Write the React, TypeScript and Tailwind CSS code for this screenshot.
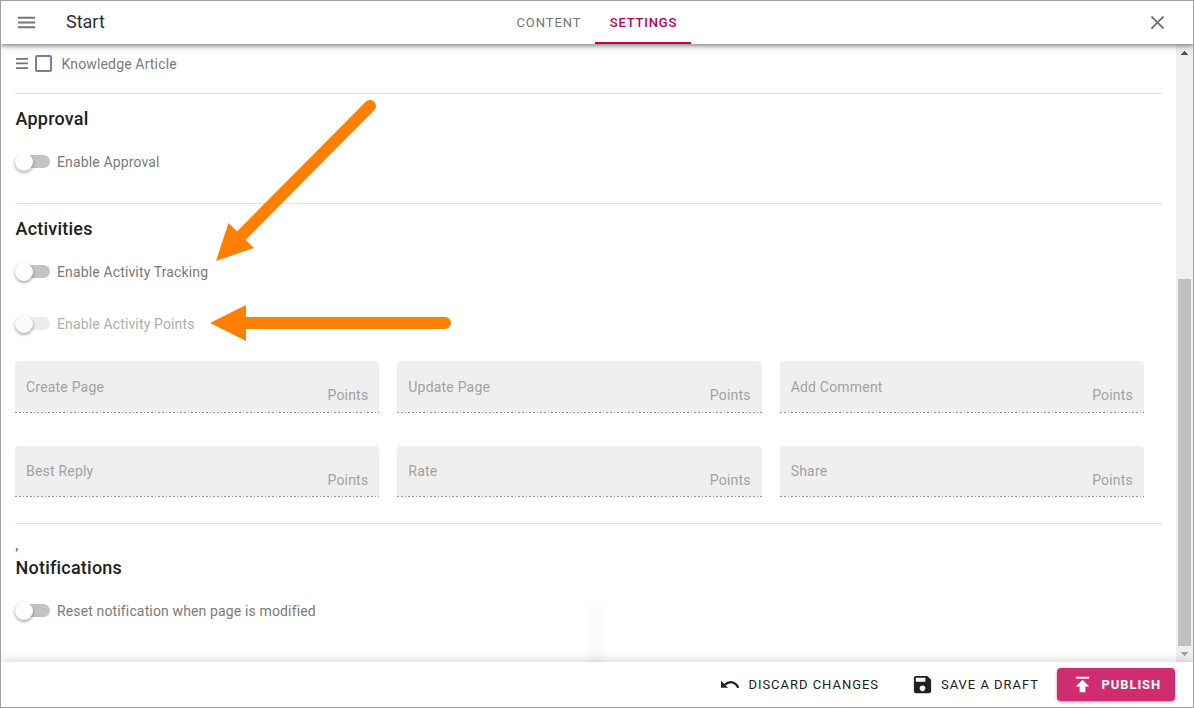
import React from "react";
import { MdMenu, MdClose, MdPublish, MdSave } from "react-icons/md";

function Divider({ className = "" }: { className?: string }) {
  return <div className={`h-px w-[1147px] shrink-0 bg-[#e0e0e0] ${className}`} />;
}

function Heading({ children, className = "" }: { children: React.ReactNode; className?: string }) {
  return (
    <h2 className={`h-6 shrink-0 pl-[0.5px] text-[18px] leading-6 font-medium tracking-[0.22px] text-[#212121] ${className}`}>
      {children}
    </h2>
  );
}

function Toggle({ label, disabled = false, className = "" }: { label: string; disabled?: boolean; className?: string }) {
  return (
    <label className={`flex h-6 shrink-0 items-start ${className}`}>
      <span className={`mt-[5px] flex h-[13px] w-[35px] rounded-full ${disabled ? "bg-[#ececec]" : "bg-[#c3c3c3]"}`}>
        <span
          className={`-mt-[2px] size-[18px] shrink-0 rounded-full shadow-[0_2px_3px_rgba(0,0,0,0.25),0_1px_4px_rgba(0,0,0,0.12)] ${
            disabled ? "bg-[#fafafa]" : "bg-white"
          }`}
        />
      </span>
      <span className={`ml-[7px] text-sm leading-6 tracking-[0.14px] ${disabled ? "text-[#adadad]" : "text-[#7a7a7a]"}`}>
        {label}
      </span>
    </label>
  );
}

function Field({ label, labelClass = "pt-4" }: { label: string; labelClass?: string }) {
  return (
    <div className="flex flex-col rounded-t-[4px] bg-[#efefef] text-sm tracking-[0.2px] text-[#a2a2a2]">
      <div className="flex flex-1 items-start justify-between pr-[11px] pl-[11px]">
        <span className={`leading-5 ${labelClass}`}>{label}</span>
        <span className="pt-6 leading-5">Points</span>
      </div>
      <div className="h-px bg-white">
        <div className="h-px bg-[repeating-linear-gradient(90deg,#969696_0_2px,transparent_2px_4px,#969696_4px_6px,transparent_6px_8px,#969696_8px_9px,transparent_9px_11px)]" />
      </div>
    </div>
  );
}

export default function App() {
  return (
    <div className="relative flex h-[708px] w-[1194px] flex-col overflow-hidden border border-[#a0a0a0] bg-white font-['Roboto',sans-serif]">
      <header className="relative z-10 grid h-[43px] shrink-0 grid-cols-[501px_190px_1fr] bg-white shadow-[0_2px_4px_rgba(0,0,0,0.38),0_3px_9px_rgba(0,0,0,0.12)]">
        <div className="flex items-center pl-[14px]">
          <MdMenu className="-mt-px size-[23px] text-[#757575]" />
          <span className="-mt-[3px] ml-7 text-[18px] text-[#303030]">Start</span>
        </div>
        <nav className="flex text-[13px]">
          <span className="flex w-[93px] items-center justify-center pl-px tracking-[0.95px] text-[#757575]">CONTENT</span>
          <span className="flex w-24 items-center justify-center border-b-2 border-[#c2004f] pt-[2px] pl-px font-medium tracking-[0.8px] text-[#c2004f]">
            SETTINGS
          </span>
        </nav>
        <div className="flex items-center justify-end pr-[24px]">
          <MdClose className="-mt-px size-[23px] text-[#757575]" />
        </div>
      </header>

      <div className="flex h-[618px] shrink-0">
        <main className="flex flex-1 flex-col pl-[14px]">
          <div className="flex h-10 shrink-0 items-center">
            <svg width="12" height="11" viewBox="0 0 12 11" className="-mt-px ml-[0.5px] fill-[#757575]">
              <path d="M0 0h12v1.7H0zM0 4.6h12v1.7H0zM0 9.2h12v1.7H0z" />
            </svg>
            <span className="-mt-px ml-[7.5px] size-[17px] rounded-[2px] border-2 border-[#808080]" />
            <span className="ml-[9.5px] text-sm tracking-[0.15px] text-[#7a7a7a]">Knowledge Article</span>
          </div>
          <Divider className="mt-[9px]" />
          <Heading className="mt-[13px]">Approval</Heading>
          <Toggle className="mt-[19px]" label="Enable Approval" />
          <Divider className="mt-[29px]" />
          <Heading className="mt-[13px]">Activities</Heading>
          <Toggle className="mt-[19px]" label="Enable Activity Tracking" />
          <Toggle className="mt-7" label="Enable Activity Points" disabled />
          <div className="mt-[25px] grid w-[1129px] shrink-0 grid-cols-3 grid-rows-[52px_51px] gap-x-[18px] gap-y-[33px]">
            <Field label="Create Page" />
            <Field label="Update Page" />
            <Field label="Add Comment" />
            <Field label="Best Reply" labelClass="pt-[15px]" />
            <Field label="Rate" labelClass="pt-[15px]" />
            <Field label="Share" labelClass="pt-[15px]" />
          </div>
          <Divider className="mt-[26px]" />
          <div className="h-8 shrink-0 pt-[11px] pl-[0.5px] text-sm leading-5 text-[#505050]">,</div>
          <Heading>Notifications</Heading>
          <Toggle className="mt-[19px]" label="Reset notification when page is modified" />
        </main>
        <aside className="flex w-[17px] flex-col items-center bg-[#f0f0f0]">
          <svg width="17" height="17" className="shrink-0 fill-[#505050]" shapeRendering="crispEdges">
            <path d="M5 11h7v-1h-1V9h-1V8H9V7H8v1H7v1H6v1H5z" />
          </svg>
          <div className="mt-[218px] h-[367px] w-[13px] shrink-0 bg-[#c1c1c1]" />
          <svg width="17" height="16" className="shrink-0 fill-[#a0a0a0]" shapeRendering="crispEdges">
            <path d="M5 6h7v1h-1v1h-1v1H9v1H8V9H7V8H6V7H5z" />
          </svg>
        </aside>
      </div>

      <footer className="relative z-10 flex min-h-0 flex-1 items-center justify-end bg-white pr-[18px] text-[13px] tracking-[0.97px] text-[#212121] shadow-[0_-1px_10px_rgba(0,0,0,0.18)]">
        <button className="flex items-center">
          <svg width="20" height="10" viewBox="0 0 20 10" className="mr-2">
            <path d="M1 .7v7h7z" fill="currentColor" />
            <path d="M4.500 5C9 .8 15.500 1 18.300 7.800" fill="none" stroke="currentColor" strokeWidth="2.300" />
          </svg>
          DISCARD CHANGES
        </button>
        <button className="ml-[32px] flex items-center">
          <MdSave className="mr-[7px] size-[23px]" />
          SAVE A DRAFT
        </button>
        <button className="ml-[18px] flex h-[33px] w-[118px] items-center rounded-[4px] bg-[#d02c71] pl-[14px] font-bold tracking-[0.9px] text-white shadow-[0_1px_3px_rgba(0,0,0,0.4)]">
          <MdPublish className="mr-[7.500px] size-[23px]" />
          PUBLISH
        </button>
      </footer>

      <div className="pointer-events-none absolute top-[607px] left-[590px] h-[70px] w-3 bg-black/3 blur-[6px]" />
      <svg className="pointer-events-none absolute -top-px -left-px z-20" width="480" height="350" viewBox="0 0 480 350">
        <g stroke="#ff8000" strokeWidth="12" strokeLinecap="round">
          <path d="M370 106 240 237" />
          <path d="M445 323H240" />
        </g>
        <g fill="#ff8000">
          <path d="M216 261 228.500 223 254 248z" />
          <path d="M210 323 246 305V341z" />
        </g>
      </svg>
    </div>
  );
}
